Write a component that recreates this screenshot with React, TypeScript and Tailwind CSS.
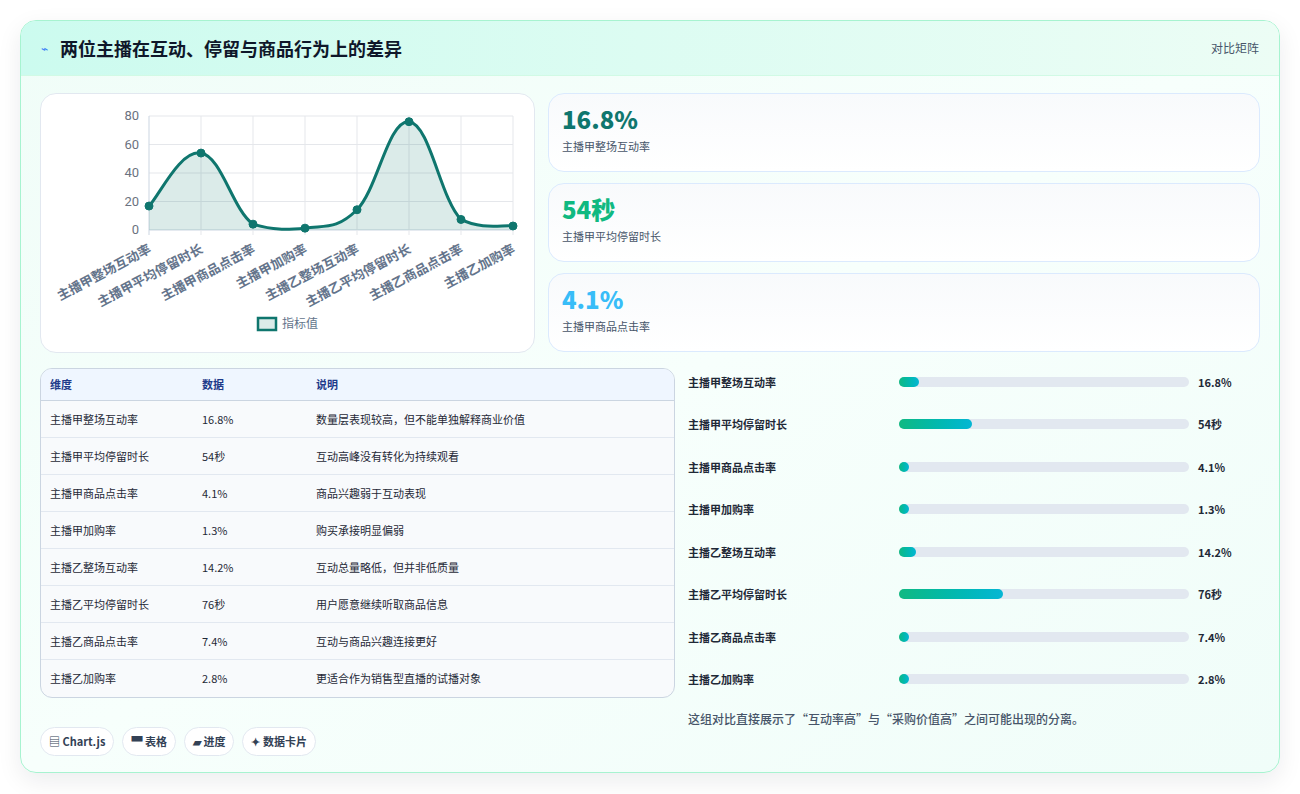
import React from "react";

const labels = ["主播甲整场互动率","主播甲平均停留时长","主播甲商品点击率","主播甲加购率","主播乙整场互动率","主播乙平均停留时长","主播乙商品点击率","主播乙加购率"];
const vals = [16.8,54,4.1,1.3,14.2,76,7.4,2.8];
const disp = ["16.8%","54秒","4.1%","1.3%","14.2%","76秒","7.4%","2.8%"];
const notes = ["数量层表现较高，但不能单独解释商业价值","互动高峰没有转化为持续观看","商品兴趣弱于互动表现","购买承接明显偏弱","互动总量略低，但并非低质量","用户愿意继续听取商品信息","互动与商品兴趣连接更好","更适合作为销售型直播的试播对象"];
const barW = [7, 25, 2, 2, 6, 36, 2, 2];

const X0 = 108, DX = 52, Y0 = 136, H = 114;
const pts = vals.map((v, i) => [X0 + DX * i, Y0 - (v * H) / 80]);
function path() {
  let d = `M${pts[0][0]},${pts[0][1]}`;
  const t = 0.4;
  for (let i = 0; i < pts.length - 1; i++) {
    const p0 = pts[i - 1] || pts[i], p1 = pts[i], p2 = pts[i + 1], p3 = pts[i + 2] || p2;
    const c1 = [p1[0] + (p2[0] - p0[0]) * t / 2, Math.min(Y0, p1[1] + (p2[1] - p0[1]) * t / 2)];
    const c2 = [p2[0] - (p3[0] - p1[0]) * t / 2, Math.min(Y0, p2[1] - (p3[1] - p1[1]) * t / 2)];
    d += ` C${c1[0]},${c1[1]} ${c2[0]},${c2[1]} ${p2[0]},${p2[1]}`;
  }
  return d;
}

function Chart() {
  const d = path();
  return (
    <svg width="494" height="259" className="block">
      {[0, 1, 2, 3, 4].map((k) => (
        <g key={k}>
          <line x1={X0} x2={472} y1={Y0 - k * 28.5} y2={Y0 - k * 28.5} stroke={k === 0 ? "#cbd5e1" : "#e5e7eb"} />
          <text x={X0 - 10} y={Y0 - k * 28.5 + 4} textAnchor="end" fontSize="13" fill="#6b7280" fontFamily="Roboto, sans-serif">{k * 20}</text>
        </g>
      ))}
      {labels.map((_, i) => (
        <line key={i} x1={X0 + DX * i} x2={X0 + DX * i} y1={22} y2={Y0 + 5} stroke={i === 0 ? "#cbd5e1" : "#e5e7eb"} />
      ))}
      <path d={`${d} L472,${Y0} L${X0},${Y0} Z`} fill="rgba(15,118,110,0.15)" />
      <path d={d} fill="none" stroke="#0f766e" strokeWidth="3" />
      {pts.map((p, i) => (
        <circle key={i} cx={p[0]} cy={p[1]} r="4" fill="#0f766e" stroke="#0f766e" strokeWidth="1" />
      ))}
      {labels.map((l, i) => (
        <text key={l} transform={`translate(${X0 + DX * i + 3},${Y0 + 22}) rotate(-28)`} textAnchor="end" fontSize="13" fontWeight="600" fill="#64748b" fontFamily="'Noto Sans CJK SC', sans-serif">{l}</text>
      ))}
      <rect x="217" y="224" width="18" height="12" fill="rgba(15,118,110,0.15)" stroke="#0f766e" strokeWidth="2.5" />
      <text x="241" y="234" fontSize="12" fill="#64748b" fontFamily="'Noto Sans CJK SC', sans-serif">指标值</text>
    </svg>
  );
}

function Stat({ v, l, c }: { v: string; l: string; c: string }) {
  return (
    <div className="h-[79px] rounded-2xl border border-[#dbeafe] bg-gradient-to-b from-[#f8fafc] to-white px-[13px] pt-[9px]">
      <div className={`text-[24px] font-extrabold leading-[32px] ${c}`}>{v}</div>
      <div className="mt-[3px] text-[11px] text-[#475569]">{l}</div>
    </div>
  );
}

export default function App() {
  return (
    <div className="min-h-[794px] bg-white p-5" style={{ fontFamily: "'Noto Sans CJK SC', 'Noto Sans', sans-serif" }}>
      <div className="h-[753px] overflow-hidden rounded-2xl border border-[#a7f3d0] bg-gradient-to-br from-[#f0fdf8] via-[#f7fffc] to-[#f0fdf9] shadow-[0_8px_24px_rgba(15,23,42,0.08)]">
        <div className="flex h-[55px] items-center justify-between border-b border-[#d1fae5] bg-gradient-to-r from-[#ccfbef] to-[#ecfdf5] px-5">
          <div className="flex items-center gap-3">
            <span className="text-[12px] text-[#3b82f6]">⌁</span>
            <span className="text-[18px] font-bold text-[#0f172a]">两位主播在互动、停留与商品行为上的差异</span>
          </div>
          <span className="text-[12px] text-[#475569]">对比矩阵</span>
        </div>
        <div className="px-[19px] pt-[17px]">
          <div className="flex gap-[13px]">
            <div className="h-[260px] w-[495px] shrink-0 rounded-2xl border border-[#e2e8f0] bg-white">
              <Chart />
            </div>
            <div className="flex flex-1 flex-col gap-[11px]">
              <Stat v="16.8%" l="主播甲整场互动率" c="text-[#0f766e]" />
              <Stat v="54秒" l="主播甲平均停留时长" c="text-[#10b981]" />
              <Stat v="4.1%" l="主播甲商品点击率" c="text-[#38bdf8]" />
            </div>
          </div>
          <div className="mt-[15px] flex gap-[13px]">
            <div className="w-[635px] shrink-0">
              <div className="overflow-hidden rounded-xl border border-[#cbd5e1] bg-[#f8fafc] text-[11px]">
                <div className="flex h-[32px] items-center border-b border-[#cbd5e1] bg-[#eff6ff] font-semibold text-[#1e3a8a]">
                  <div className="w-[161px] pl-[9px]">维度</div>
                  <div className="w-[114px]">数据</div>
                  <div>说明</div>
                </div>
                {labels.map((l, i) => (
                  <div key={l} className={`flex h-[37px] items-center text-[#1f2937] ${i < 7 ? "border-b border-[#e2e8f0]" : ""}`}>
                    <div className="w-[161px] pl-[9px]">{l}</div>
                    <div className="w-[114px]">{disp[i]}</div>
                    <div>{notes[i]}</div>
                  </div>
                ))}
              </div>
              <div className="mt-[29px] flex gap-[8px] text-[11px] font-semibold text-[#334155]">
                {["▤ Chart.js", "▀ 表格", "▰ 进度", "✦ 数据卡片"].map((c) => (
                  <span key={c} className="rounded-full border border-[#e2e8f0] bg-white px-[8px] py-[5px]">{c}</span>
                ))}
              </div>
            </div>
            <div className="flex-1 pt-[4px]">
              {labels.map((l, i) => (
                <div key={l} className="flex h-[42.5px] items-center pb-[13px] text-[11px] font-semibold text-[#1f2937]" style={{ marginTop: i === 0 ? -5 : 0 }}>
                  <div className="w-[211px]">{l}</div>
                  <div className="h-[10px] w-[290px] rounded-full bg-[#e2e8f0]">
                    <div className="h-[10px] min-w-[10px] rounded-full bg-gradient-to-r from-[#10b981] to-[#06b6d4]" style={{ width: `${barW[i]}%` }} />
                  </div>
                  <div className="ml-[9px]">{disp[i]}</div>
                </div>
              ))}
              <div className="mt-[3px] text-[12px] font-medium text-[#475569]">这组对比直接展示了“互动率高”与“采购价值高”之间可能出现的分离。</div>
            </div>
          </div>
        </div>
      </div>
    </div>
  );
}
